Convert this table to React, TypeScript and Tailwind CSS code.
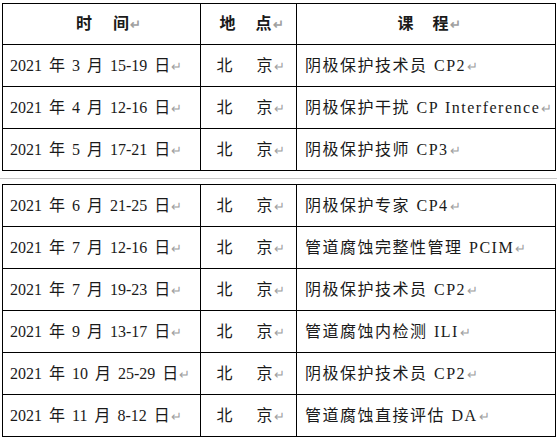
const top = [
  { date: "2021 年 3 月 15-19 日", course: "阴极保护技术员 CP2" },
  { date: "2021 年 4 月 12-16 日", course: "阴极保护干扰 CP Interference" },
  { date: "2021 年 5 月 17-21 日", course: "阴极保护技师 CP3" },
];

const bottom = [
  { date: "2021 年 6 月 21-25 日", course: "阴极保护专家 CP4" },
  { date: "2021 年 7 月 12-16 日", course: "管道腐蚀完整性管理 PCIM" },
  { date: "2021 年 7 月 19-23 日", course: "阴极保护技术员 CP2" },
  { date: "2021 年 9 月 13-17 日", course: "管道腐蚀内检测 ILI" },
  { date: "2021 年 10 月 25-29 日", course: "阴极保护技术员 CP2" },
  { date: "2021 年 11 月 8-12 日", course: "管道腐蚀直接评估 DA" },
];

function Mark() {
  return <span className="text-[#a0a0a0] text-[13px] ml-px tracking-normal">↵</span>;
}

function Cols() {
  return (
    <colgroup>
      <col className="w-[198px]" />
      <col className="w-[96px]" />
      <col className="w-[259px]" />
    </colgroup>
  );
}

function Row({ date, course }: { date: string; course: string }) {
  return (
    <tr className="h-[42px]">
      <td className="border border-black pl-[7px] whitespace-nowrap [word-spacing:3px]">
        {date}
        <Mark />
      </td>
      <td className="border border-black text-center pl-[4px] whitespace-nowrap">
        北<span className="inline-block w-[24px]" />京
        <Mark />
      </td>
      <td className="border border-black pl-[8px] whitespace-nowrap overflow-hidden tracking-[1.5px] [word-spacing:1px]">
        {course}
        <Mark />
      </td>
    </tr>
  );
}

export default function App() {
  return (
    <div
      className="w-[557px] h-[439px] bg-white text-[16px] text-[#1a1a1a] overflow-hidden"
      style={{ fontFamily: '"Liberation Serif", "Noto Sans CJK SC", serif' }}
    >
      <table className="mt-[3px] ml-[2px] w-[553px] table-fixed border-collapse">
        <Cols />
        <tbody>
          <tr className="h-[41px] font-bold">
            <td className="border border-black text-center pl-[14px]">
              时<span className="inline-block w-[21px]" />间
              <Mark />
            </td>
            <td className="border border-black text-center pl-[6px]">
              地<span className="inline-block w-[20px]" />点
              <Mark />
            </td>
            <td className="border border-black text-center pl-[6px]">
              课<span className="inline-block w-[19px]" />程
              <Mark />
            </td>
          </tr>
          {top.map((r, i) => (
            <Row key={i} {...r} />
          ))}
        </tbody>
      </table>
      <div className="mt-[7px] h-px bg-[#c8c8c8]" />
      <table className="mt-[5px] ml-[2px] w-[553px] table-fixed border-collapse">
        <Cols />
        <tbody>
          {bottom.map((r, i) => (
            <Row key={i} {...r} />
          ))}
        </tbody>
      </table>
    </div>
  );
}
